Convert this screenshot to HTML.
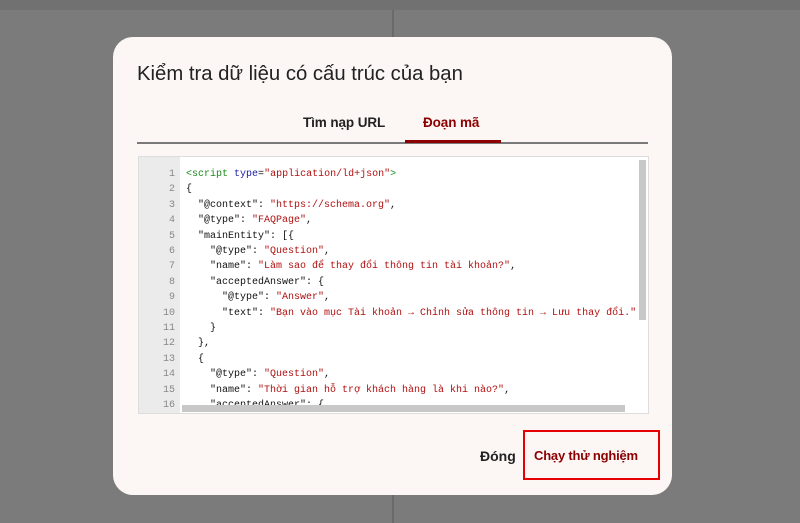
<!DOCTYPE html>
<html><head><meta charset="utf-8"><style>
body{margin:0;width:800px;height:523px;background:#7b7b7b;position:relative;overflow:hidden;font-family:"Liberation Sans",sans-serif}
.top{position:absolute;left:0;top:0;width:800px;height:10px;background:#717171}
.vl{position:absolute;left:392px;top:10px;width:2px;height:513px;background:#6a6a6a}
.dlg{position:absolute;left:113px;top:37px;width:559px;height:458px;background:#fcf6f5;border-radius:20px}
.title{position:absolute;left:24px;top:26px;font-size:20.3px;color:#222}
.tab{position:absolute;top:78px;font-size:13.5px;font-weight:bold;letter-spacing:-0.1px}
.line{position:absolute;left:24px;top:105px;width:511px;height:2px;background:#7a7a7a}
.ul{position:absolute;left:292px;top:103px;width:96px;height:3px;background:#8b0000}
.code{position:absolute;left:25px;top:119px;width:509px;height:256px;background:#fff;border:1px solid #ddd;overflow:hidden}
.gut{position:absolute;left:0;top:0;width:41px;height:256px;background:#ebebeb}
pre{margin:0;position:absolute;top:10px;left:0;font-family:"Liberation Mono",monospace;font-size:10px;line-height:15.4px;color:#111}
.n{display:inline-block;width:36px;text-align:right;color:#888;margin-right:11px}
.s{color:#b01010}.t{color:#1a8a1a}.a{color:#1a1aa6}
.vs{position:absolute;left:500px;top:3px;width:7px;height:160px;background:#c8c8c8}
.hs{position:absolute;left:43px;top:248px;width:443px;height:7px;background:#c8c8c8}
.btn1{position:absolute;left:367px;top:411px;font-size:14px;font-weight:bold;color:#222}
.btn2{position:absolute;left:410px;top:393px;width:137px;height:50px;border:2px solid #e60000;box-sizing:border-box;background:#fcf6f5}
.btn2 span{position:absolute;left:9px;top:16px;font-size:13px;font-weight:bold;color:#8b0000;white-space:nowrap;letter-spacing:-0.2px}
</style></head><body>
<div class="top"></div><div class="vl"></div>
<div class="dlg">
<div class="title">Kiểm tra dữ liệu có cấu trúc của bạn</div>
<div class="tab" style="left:190px;color:#222">Tìm nạp URL</div>
<div class="tab" style="left:310px;color:#8b0000">Đoạn mã</div>
<div class="line"></div><div class="ul"></div>
<div class="code"><div class="gut"></div>
<pre><span class="n">1</span><span class="t">&lt;script</span> <span class="a">type</span>=<span class="s">"application/ld+json"</span><span class="t">&gt;</span>
<span class="n">2</span>{
<span class="n">3</span>  "@context": <span class="s">"https://schema.org"</span>,
<span class="n">4</span>  "@type": <span class="s">"FAQPage"</span>,
<span class="n">5</span>  "mainEntity": [{
<span class="n">6</span>    "@type": <span class="s">"Question"</span>,
<span class="n">7</span>    "name": <span class="s">"Làm sao để thay đổi thông tin tài khoản?"</span>,
<span class="n">8</span>    "acceptedAnswer": {
<span class="n">9</span>      "@type": <span class="s">"Answer"</span>,
<span class="n">10</span>      "text": <span class="s">"Bạn vào mục Tài khoản → Chỉnh sửa thông tin → Lưu thay đổi."</span>
<span class="n">11</span>    }
<span class="n">12</span>  },
<span class="n">13</span>  {
<span class="n">14</span>    "@type": <span class="s">"Question"</span>,
<span class="n">15</span>    "name": <span class="s">"Thời gian hỗ trợ khách hàng là khi nào?"</span>,
<span class="n">16</span>    "acceptedAnswer": {</pre>
<div class="vs"></div><div class="hs"></div>
</div>
<div class="btn1">Đóng</div>
<div class="btn2"><span>Chạy thử nghiệm</span></div>
</div>
</body></html>
